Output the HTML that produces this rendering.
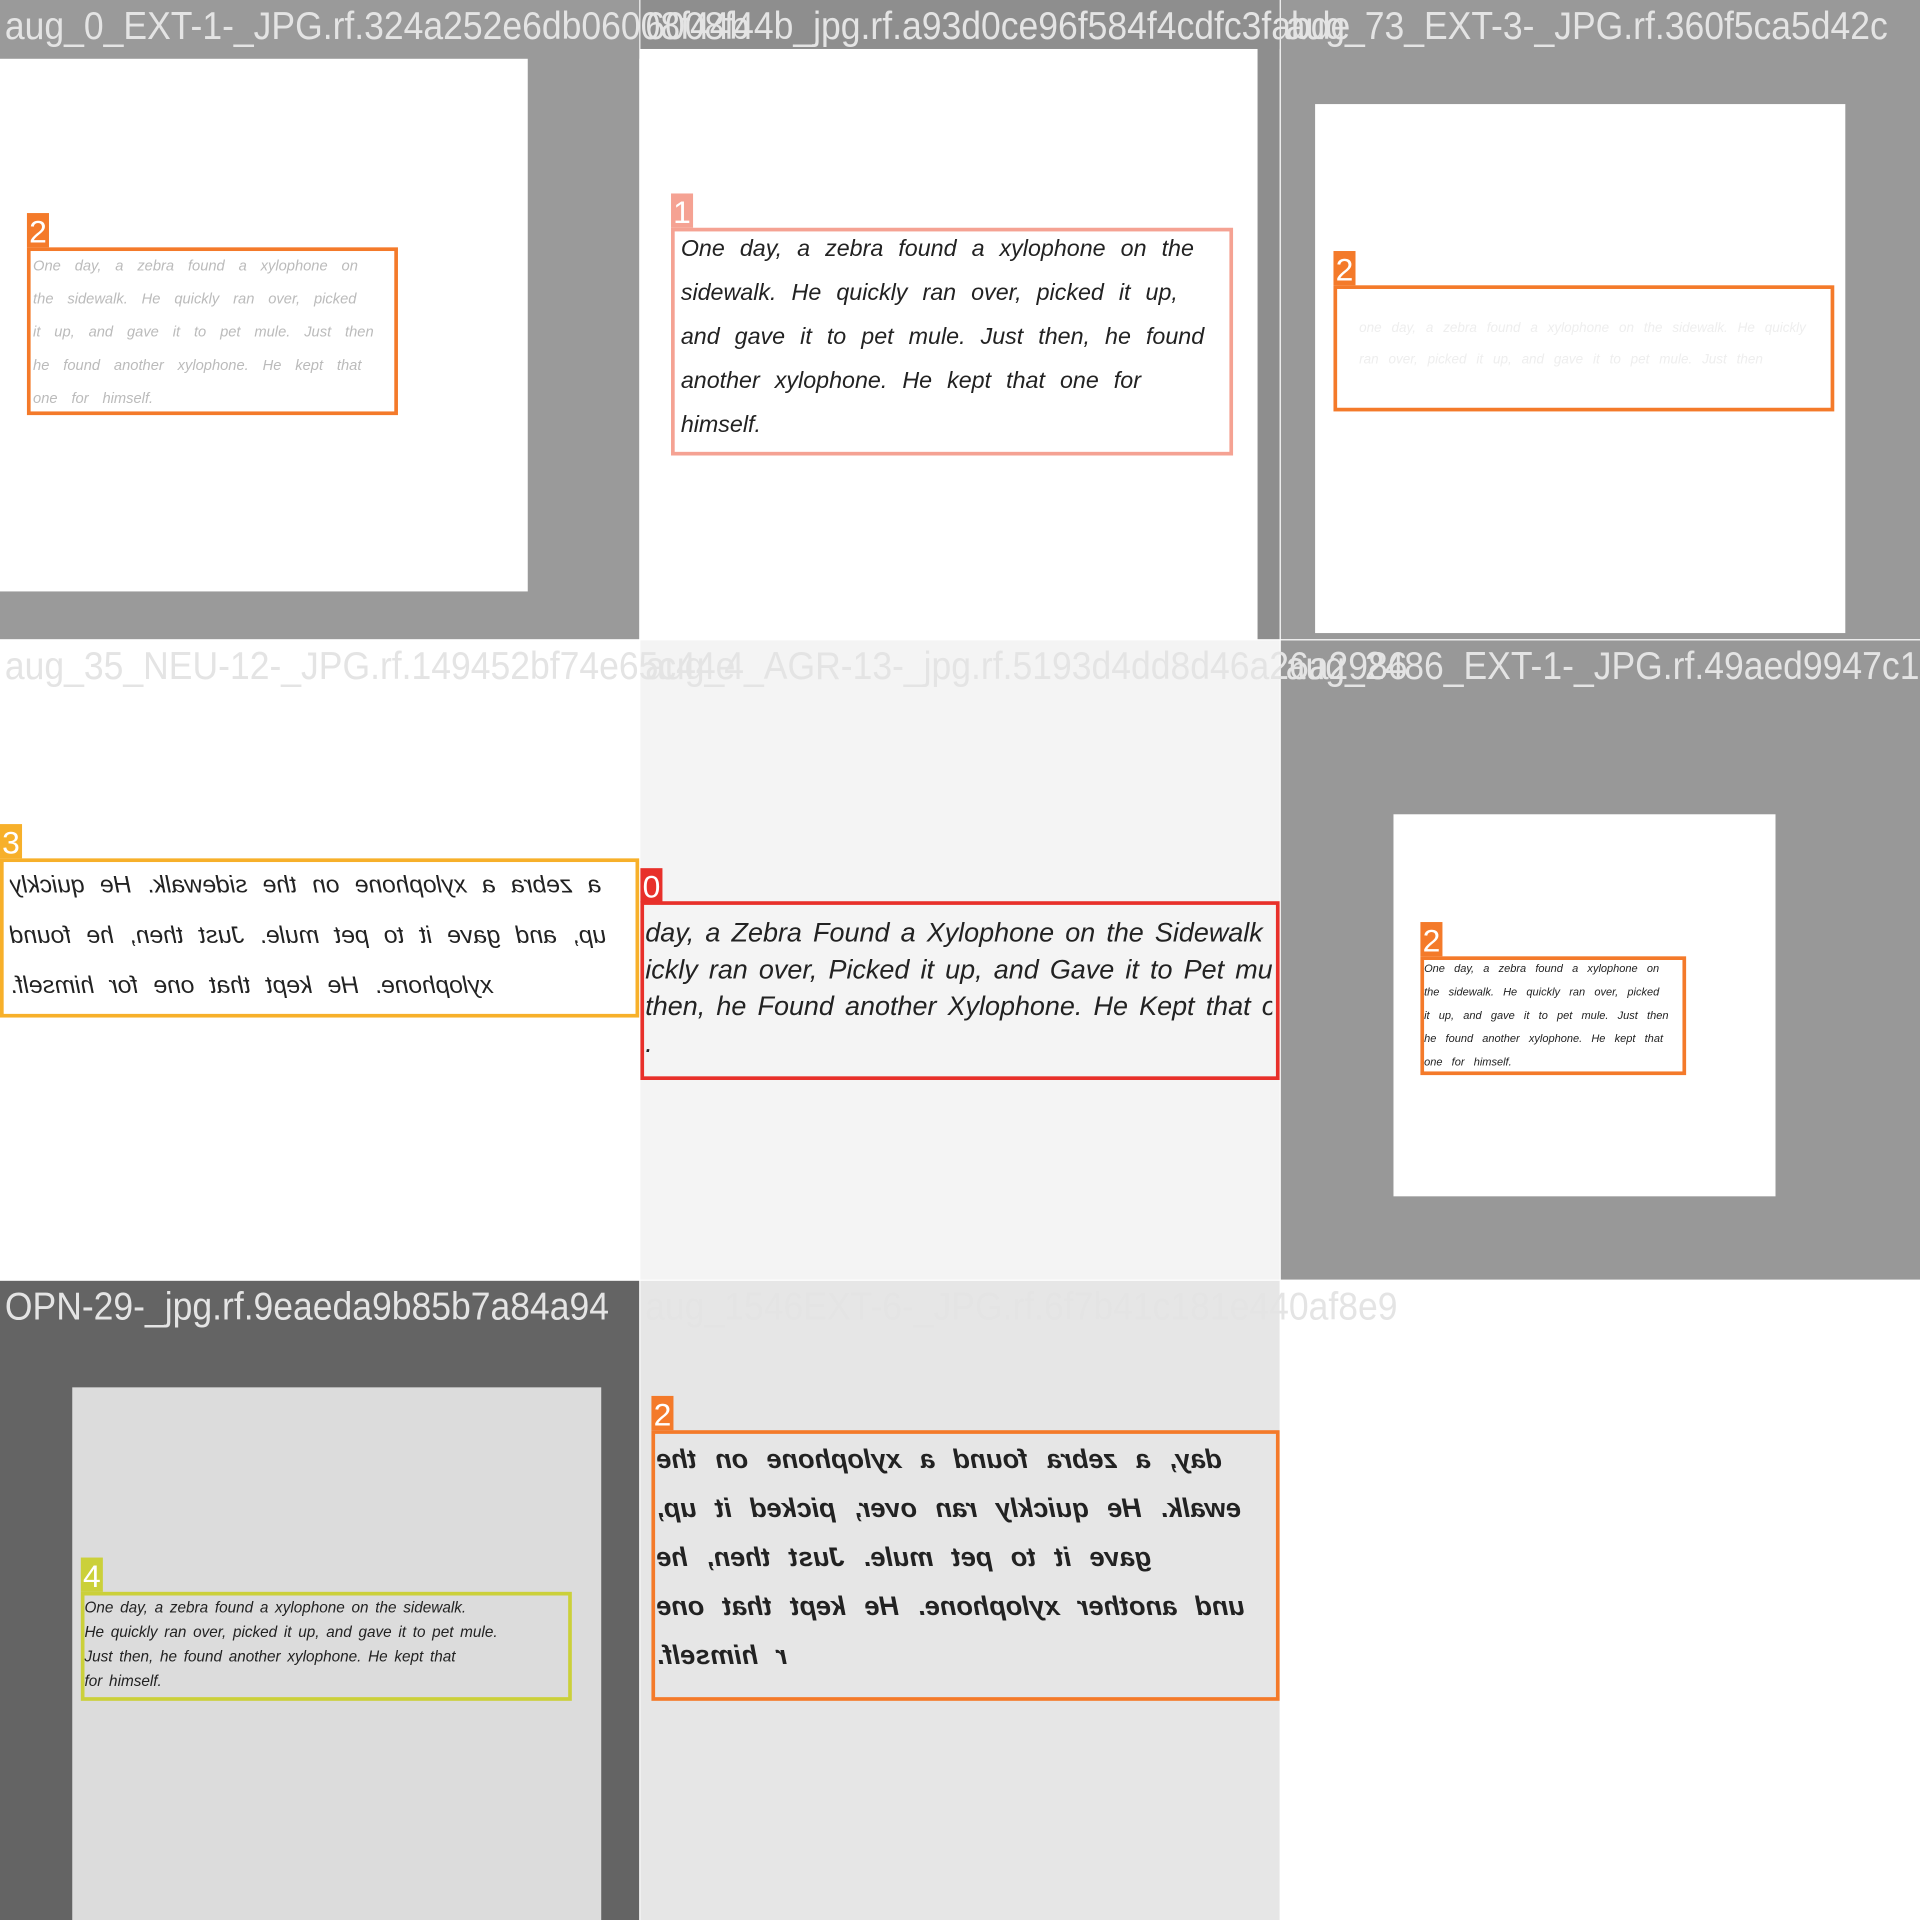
<!DOCTYPE html>
<html><head><meta charset="utf-8"><style>
html,body{margin:0;padding:0;width:1920px;height:1920px;overflow:hidden;background:#fff}
#w{position:absolute;left:0;top:0;width:1568px;height:1568px;transform:scale(1.22449);transform-origin:0 0;background:#fff;overflow:hidden}
.r{position:absolute}
.t{position:absolute;white-space:nowrap;font-family:"Liberation Sans",sans-serif;font-size:29px;line-height:36px;color:#e4e4e4;transform:scaleY(1.1);transform-origin:0 0}
.b{position:absolute;border-style:solid;box-sizing:border-box}
.l{position:absolute;width:18px;height:28px;color:#fff;font-family:"Liberation Sans",sans-serif;font-size:26px;line-height:30px;text-align:center}
.hw{position:absolute;font-family:"Liberation Sans",sans-serif;font-style:italic;white-space:nowrap;color:#222;overflow:hidden}
.m{transform:scaleX(-1)}
</style></head><body><div id="w">
<div class="r" style="left:0;top:0;width:522px;height:522px;background:#9a9a9a"></div>
<div class="r" style="left:0;top:38px;width:431px;height:445px;background:#fff"></div>
<div class="r" style="left:523px;top:0;width:522px;height:522px;background:#fff"></div>
<div class="r" style="left:1027px;top:0;width:18px;height:522px;background:#8e8e8e"></div>
<div class="r" style="left:1046px;top:0;width:522px;height:522px;background:#999"></div>
<div class="r" style="left:1074px;top:85px;width:433px;height:432px;background:#fff"></div>
<div class="r" style="left:0;top:523px;width:522px;height:522px;background:#fff"></div>
<div class="r" style="left:523px;top:523px;width:522px;height:522px;background:#f4f4f4"></div>
<div class="r" style="left:1046px;top:523px;width:522px;height:522px;background:#989898"></div>
<div class="r" style="left:1138px;top:665px;width:312px;height:312px;background:#fff"></div>
<div class="r" style="left:0;top:1046px;width:522px;height:522px;background:#646464"></div>
<div class="r" style="left:59px;top:1133px;width:432px;height:435px;background:#dcdcdc"></div>
<div class="r" style="left:523px;top:1046px;width:522px;height:522px;background:#e6e6e6"></div>

<div class="r" style="left:0;top:0;width:522px;height:48px;background:#9a9a9a"></div>
<div class="r" style="left:523px;top:0;width:522px;height:40px;background:#8e8e8e"></div>

<div class="b" style="left:22px;top:202px;width:303px;height:137px;border-width:3px;border-color:#f47a2a"></div>
<div class="l" style="left:22px;top:174px;background:#f47a2a">2</div>
<div class="hw" style="left:27px;top:204px;width:294px;font-size:12px;line-height:27px;word-spacing:8px;color:#bbb">One day, a zebra found a xylophone on<br>the sidewalk. He quickly ran over, picked<br>it up, and gave it to pet mule. Just then<br>he found another xylophone. He kept that<br>one for himself.</div>

<div class="b" style="left:548px;top:186px;width:459px;height:186px;border-width:3px;border-color:#f5a293"></div>
<div class="l" style="left:548px;top:158px;background:#f5a293">1</div>
<div class="hw" style="left:556px;top:186px;width:448px;font-size:19px;line-height:36px;word-spacing:7px">One day, a zebra found a xylophone on the<br>sidewalk. He quickly ran over, picked it up,<br>and gave it to pet mule. Just then, he found<br>another xylophone. He kept that one for<br>himself.</div>

<div class="b" style="left:1089px;top:233px;width:409px;height:103px;border-width:3px;border-color:#f47a2a"></div>
<div class="l" style="left:1089px;top:205px;background:#f47a2a">2</div>
<div class="hw" style="left:1110px;top:255px;width:384px;font-size:11px;line-height:26px;word-spacing:5px;color:#eee">one day, a zebra found a xylophone on the sidewalk. He quickly<br>ran over, picked it up, and gave it to pet mule. Just then</div>

<div class="b" style="left:0;top:701px;width:522px;height:130px;border-width:3px;border-color:#f7b02a"></div>
<div class="l" style="left:0;top:673px;background:#f7b02a">3</div>
<div class="hw m" style="left:8px;top:703px;width:508px;font-size:20px;line-height:41px;word-spacing:7px;text-align:right">a zebra a xylophone on the sidewalk. He quickly<br>up, and gave it to pet mule. Just then, he found<br>xylophone. He kept that one for himself.</div>

<div class="b" style="left:523px;top:736px;width:522px;height:146px;border-width:3px;border-color:#e8302a"></div>
<div class="l" style="left:523px;top:709px;background:#e8302a">0</div>
<div class="hw" style="left:527px;top:747px;font-size:22px;line-height:30px;word-spacing:3px;width:512px">day, a Zebra Found a Xylophone on the Sidewalk<br>ickly ran over, Picked it up, and Gave it to Pet mu<br>then, he Found another Xylophone. He Kept that one for<br>.</div>

<div class="b" style="left:1160px;top:781px;width:217px;height:97px;border-width:3px;border-color:#f47a2a"></div>
<div class="l" style="left:1160px;top:753px;background:#f47a2a">2</div>
<div class="hw" style="left:1163px;top:782px;width:211px;font-size:9px;line-height:19px;word-spacing:5px">One day, a zebra found a xylophone on<br>the sidewalk. He quickly ran over, picked<br>it up, and gave it to pet mule. Just then<br>he found another xylophone. He kept that<br>one for himself.</div>

<div class="b" style="left:66px;top:1300px;width:401px;height:89px;border-width:3px;border-color:#cbd03a"></div>
<div class="l" style="left:66px;top:1272px;background:#cbd03a">4</div>
<div class="hw" style="left:69px;top:1303px;width:395px;font-size:12.5px;line-height:20px;word-spacing:2px">One day, a zebra found a xylophone on the sidewalk.<br>He quickly ran over, picked it up, and gave it to pet mule.<br>Just then, he found another xylophone. He kept that<br>for himself.</div>

<div class="b" style="left:532px;top:1168px;width:513px;height:221px;border-width:3px;border-color:#f47a2a"></div>
<div class="l" style="left:532px;top:1140px;background:#f47a2a">2</div>
<div class="hw m" style="left:536px;top:1172px;width:506px;font-size:22px;line-height:40px;word-spacing:9px;text-align:right;font-weight:bold">day, a zebra found a xylophone on the<br>ewalk. He quickly ran over, picked it up,<br>gave it to pet mule. Just then, he<br>und another xylophone. He kept that one<br>r himself.</div>

<div class="t" style="left:4px;top:2px">aug_0_EXT-1-_JPG.rf.324a252e6db06008f44b</div>
<div class="t" style="left:527px;top:2px">6008f44b_jpg.rf.a93d0ce96f584f4cdfc3fabde</div>
<div class="t" style="left:1050px;top:2px">aug_73_EXT-3-_JPG.rf.360f5ca5d42c</div>
<div class="t" style="left:4px;top:525px">aug_35_NEU-12-_JPG.rf.149452bf74e65c44e</div>
<div class="t" style="left:527px;top:525px">aug_4_AGR-13-_jpg.rf.5193d4dd8d46a26a2986</div>
<div class="t" style="left:1050px;top:525px">aug_2486_EXT-1-_JPG.rf.49aed9947c1</div>
<div class="t" style="left:4px;top:1048px">OPN-29-_jpg.rf.9eaeda9b85b7a84a94</div>
<div class="t" style="left:527px;top:1048px">aug_1546EXT-6-_JPG.rf.6f7b41c181e440af8e9</div>
</div></body></html>
